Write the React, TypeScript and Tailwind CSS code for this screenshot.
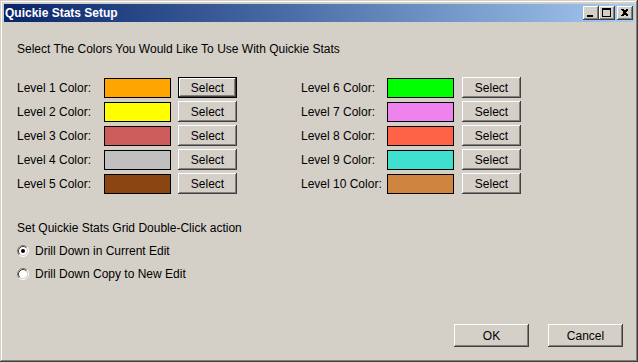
const raised =
  'bg-[#d4d0c8] shadow-[inset_-1px_-1px_#404040,inset_1px_1px_#ffffff,inset_-2px_-2px_#808080,inset_2px_2px_#d4d0c8]'

const left = [
  { label: 'Level 1 Color:', color: '#ffa500' },
  { label: 'Level 2 Color:', color: '#ffff00' },
  { label: 'Level 3 Color:', color: '#cd5c5c' },
  { label: 'Level 4 Color:', color: '#c0c0c0' },
  { label: 'Level 5 Color:', color: '#8b4513' },
]

const right = [
  { label: 'Level 6 Color:', color: '#00ff00' },
  { label: 'Level 7 Color:', color: '#ee82ee' },
  { label: 'Level 8 Color:', color: '#ff6347' },
  { label: 'Level 9 Color:', color: '#40e0d0' },
  { label: 'Level 10 Color:', color: '#cd853f' },
]

function CaptionButton({ kind }: { kind: 'min' | 'max' | 'close' }) {
  return (
    <div className={`w-[16px] h-[14px] flex items-center justify-center ${raised}`}>
      <svg width="16" height="14" viewBox="0 0 16 14" shapeRendering="crispEdges">
        {kind === 'min' && <rect x="4" y="9" width="6" height="2" fill="#000" />}
        {kind === 'max' && (
          <g fill="none" stroke="#000">
            <rect x="3.5" y="2.5" width="8" height="8" />
            <line x1="3" y1="3.5" x2="12" y2="3.5" />
          </g>
        )}
        {kind === 'close' && (
          <g fill="#000">
            <path d="M4 3h2l1 1h1l1-1h2v1l-2 2v1l2 2v1h-2l-1-1h-1l-1 1h-2v-1l2-2v-1l-2-2z" />
          </g>
        )}
      </svg>
    </div>
  )
}

function Radio({ checked }: { checked?: boolean }) {
  return (
    <svg width="12" height="12" viewBox="0 0 12 12">
      <circle cx="6" cy="6" r="4.5" fill="#fff" />
      <path d="M9.89 2.11 A5.5 5.5 0 0 0 2.11 9.89" fill="none" stroke="#808080" />
      <path d="M2.11 9.89 A5.5 5.5 0 0 0 9.89 2.11" fill="none" stroke="#fff" />
      <path d="M9.18 2.82 A4.5 4.5 0 0 0 2.82 9.18" fill="none" stroke="#404040" />
      <path d="M2.82 9.18 A4.5 4.5 0 0 0 9.18 2.82" fill="none" stroke="#d4d0c8" />
      {checked && <circle cx="6" cy="6" r="2" fill="#000" />}
    </svg>
  )
}

function ColorRow({ label, color, labelW, btnGap, isDefault }: { label: string; color: string; labelW: string; btnGap: string; isDefault?: boolean }) {
  return (
    <div className="flex items-center h-[21px]">
      <span className={`${labelW} leading-[14px]`}>{label}</span>
      <div className="w-[67px] h-[20px] border border-black" style={{ backgroundColor: color }} />
      {isDefault ? (
        <div className={`${btnGap} w-[59px] h-[21px] border border-black`}>
          <div className={`w-full h-full flex items-center justify-center ${raised}`}>Select</div>
        </div>
      ) : (
        <div className={`${btnGap} w-[59px] h-[21px] flex items-center justify-center ${raised}`}>Select</div>
      )}
    </div>
  )
}

export default function App() {
  return (
    <div
      className="w-[638px] h-[362px] p-[4px] flex flex-col bg-[#d4d0c8] text-black text-[12px] shadow-[inset_-1px_-1px_#404040,inset_1px_1px_#d4d0c8,inset_-2px_-2px_#808080,inset_2px_2px_#ffffff]"
      style={{ fontFamily: '"Liberation Sans", Arial, sans-serif' }}
    >
      <div className="h-[18px] flex items-center pl-[1px] pr-[1px] bg-gradient-to-r from-[#0a246a] to-[#a6caf0]">
        <span className="flex-1 text-white font-bold leading-[14px]">Quickie Stats Setup</span>
        <CaptionButton kind="min" />
        <CaptionButton kind="max" />
        <div className="ml-[2px]">
          <CaptionButton kind="close" />
        </div>
      </div>

      <div className="flex-1 flex flex-col pl-[13px] pr-[11px] pt-[20px] pb-[11px]">
        <div className="leading-[14px]">Select The Colors You Would Like To Use With Quickie Stats</div>

        <div className="mt-[21px] flex gap-[64px]">
          <div className="flex flex-col gap-[3px]">
            {left.map((r, i) => (
              <ColorRow key={r.label} label={r.label} color={r.color} labelW="w-[87px]" btnGap="ml-[7px]" isDefault={i === 0} />
            ))}
          </div>
          <div className="flex flex-col gap-[3px]">
            {right.map((r) => (
              <ColorRow key={r.label} label={r.label} color={r.color} labelW="w-[86px]" btnGap="ml-[8px]" />
            ))}
          </div>
        </div>

        <div className="mt-[27px] leading-[14px]">Set Quickie Stats Grid Double-Click action</div>
        <div className="mt-[9px] flex flex-col gap-[9px]">
          <div className="flex items-center h-[14px]">
            <Radio checked />
            <span className="ml-[6px]">Drill Down in Current Edit</span>
          </div>
          <div className="flex items-center h-[14px]">
            <Radio />
            <span className="ml-[6px]">Drill Down Copy to New Edit</span>
          </div>
        </div>

        <div className="mt-auto flex justify-end gap-[19px]">
          <div className={`w-[75px] h-[23px] flex items-center justify-center ${raised}`}>OK</div>
          <div className={`w-[75px] h-[23px] flex items-center justify-center ${raised}`}>Cancel</div>
        </div>
      </div>
    </div>
  )
}
